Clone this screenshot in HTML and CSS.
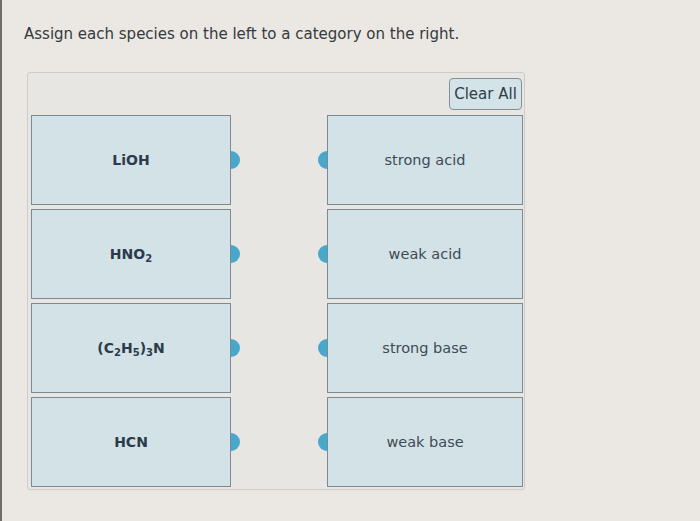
FILE: index.html
```html
<!DOCTYPE html>
<html lang="en">
<head>
    <meta charset="UTF-8">
    <meta name="viewport" content="width=device-width, initial-scale=1.0">
    <title>Assign species</title>
    <link rel="stylesheet" href="styles.css">
</head>
<body>
    <div class="page">
        <p class="prompt">Assign each species on the left to a category on the right.</p>

        <div class="panel">
            <div class="toolbar">
                <button type="button" class="clear-btn">Clear All</button>
            </div>

            <div class="board">
                <div class="card species"><span>LiOH</span></div>
                <div class="card category"><span>strong acid</span></div>

                <div class="card species"><span>HNO<sub>2</sub></span></div>
                <div class="card category"><span>weak acid</span></div>

                <div class="card species"><span>(C<sub>2</sub>H<sub>5</sub>)<sub>3</sub>N</span></div>
                <div class="card category"><span>strong base</span></div>

                <div class="card species"><span>HCN</span></div>
                <div class="card category"><span>weak base</span></div>
            </div>
        </div>
    </div>
</body>
</html>
```

FILE: styles.css
```css
* {
    margin: 0;
    padding: 0;
    box-sizing: border-box;
}

body {
    background-color: #ebe7e2;
    color: #333333;
    font-family: 'DejaVu Sans', Verdana, sans-serif;
    width: 700px;
    height: 521px;
    overflow: hidden;
    border-left: 2px solid #6f6d6a;
}

.page {
    padding: 25px 0 0 22px;
}

.prompt {
    font-size: 15px;
    color: #333a40;
    margin-bottom: 29px;
}

.panel {
    width: 498px;
    height: 418px;
    margin-left: 3px;
    background-color: #e8e6e2;
    border: 1px solid #cfcdca;
    border-radius: 3px;
    padding: 5px 2px 2px 2px;
}

.toolbar {
    display: flex;
    justify-content: flex-end;
    margin-bottom: 5px;
}

.clear-btn {
    width: 73px;
    height: 32px;
    background-color: #d4e3e7;
    color: #2f3d48;
    border: 1px solid #858e92;
    border-radius: 4px;
    font-family: inherit;
    font-size: 15px;
}

.board {
    display: grid;
    grid-template-columns: 200px 196px;
    grid-auto-rows: 90px;
    column-gap: 96px;
    row-gap: 4px;
    padding-left: 1px;
}

.card {
    position: relative;
    display: flex;
    align-items: center;
    justify-content: center;
    background-color: #d3e2e6;
    border: 1.5px solid #7d8b90;
}

.species {
    font-size: 14px;
    font-weight: bold;
    color: #2c3b4c;
}

.category {
    font-size: 14.5px;
    color: #3e4b57;
}

sub {
    font-size: 10px;
    vertical-align: -3px;
    line-height: 0;
}

.species::after,
.category::before {
    content: '';
    position: absolute;
    top: 50%;
    width: 9px;
    height: 18px;
    margin-top: -9px;
    background-color: #48a8cc;
}

.species::after {
    right: -10px;
    border-radius: 0 9px 9px 0;
}

.category::before {
    left: -10px;
    border-radius: 9px 0 0 9px;
}
```
